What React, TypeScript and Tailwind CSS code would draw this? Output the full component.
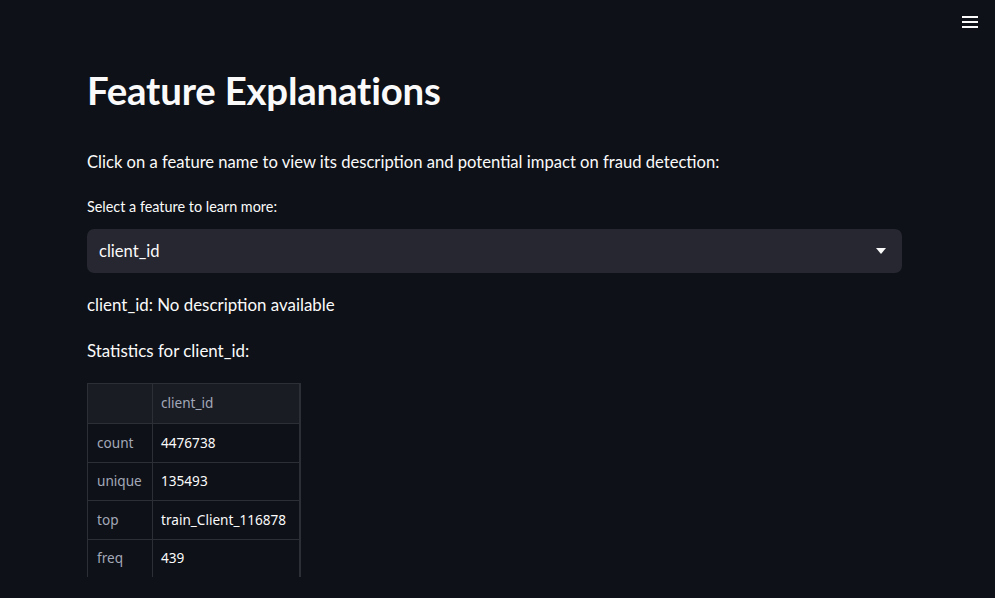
import React from "react";

const rows: [string, string][] = [
  ["count", "4476738"],
  ["unique", "135493"],
  ["top", "train_Client_116878"],
  ["freq", "439"],
];

export default function App() {
  return (
    <div
      className="relative w-[995px] h-[598px] overflow-hidden bg-[#0e1117] text-[#fafafa]"
      style={{ fontFamily: "Lato, 'Noto Sans', sans-serif" }}
    >
      <button className="absolute right-[17px] top-[16px] flex flex-col gap-[3px] w-[16px]">
        <span className="block h-[2px] w-[16px] bg-[#fafafa]" />
        <span className="block h-[2px] w-[16px] bg-[#fafafa]" />
        <span className="block h-[2px] w-[16px] bg-[#fafafa]" />
      </button>

      <div className="pl-[87px] pt-[66px] w-[902px]">
        <h1 className="text-[38.4px] leading-[48px] font-bold tracking-[-0.2px]">Feature Explanations</h1>

        <p className="mt-[36px] text-[16.6px] leading-[24px]">
          Click on a feature name to view its description and potential impact on fraud detection:
        </p>

        <div className="mt-[23px] text-[14.4px] leading-[20px]">Select a feature to learn more:</div>

        <div className="mt-[12px] h-[44px] w-[815px] rounded-[7px] bg-[#262730] flex items-center justify-between pl-[12px] pr-[16px]">
          <span className="text-[16.6px]">client_id</span>
          <svg width="10" height="6" viewBox="0 0 10 6">
            <path d="M0 0 L10 0 L5 6 Z" fill="#fafafa" />
          </svg>
        </div>

        <p className="mt-[20px] text-[16.9px] leading-[24px]">client_id: No description available</p>

        <p className="mt-[22px] text-[16.9px] leading-[24px]">Statistics for client_id:</p>

        <div className="mt-[20px] h-[194px] overflow-hidden">
          <table
            className="border-collapse text-[13.6px]"
            style={{ fontFamily: "'Noto Sans', sans-serif" }}
          >
            <thead>
              <tr className="h-[40px] bg-[#1a1c24]">
                <th className="w-[65px] border border-[#2d2f36]" />
                <th className="w-[147px] border border-[#2d2f36] border-r-2 text-left font-normal pl-[8px] text-[#a3a8b8]">
                  client_id
                </th>
              </tr>
            </thead>
            <tbody>
              {rows.map(([k, v]) => (
                <tr key={k} className="h-[38.5px]">
                  <td className="border border-[#2d2f36] pl-[9px] text-[#a3a8b8]">{k}</td>
                  <td className="border border-[#2d2f36] border-r-2 pl-[8px] text-[#fafafa]">{v}</td>
                </tr>
              ))}
            </tbody>
          </table>
        </div>
      </div>
    </div>
  );
}
